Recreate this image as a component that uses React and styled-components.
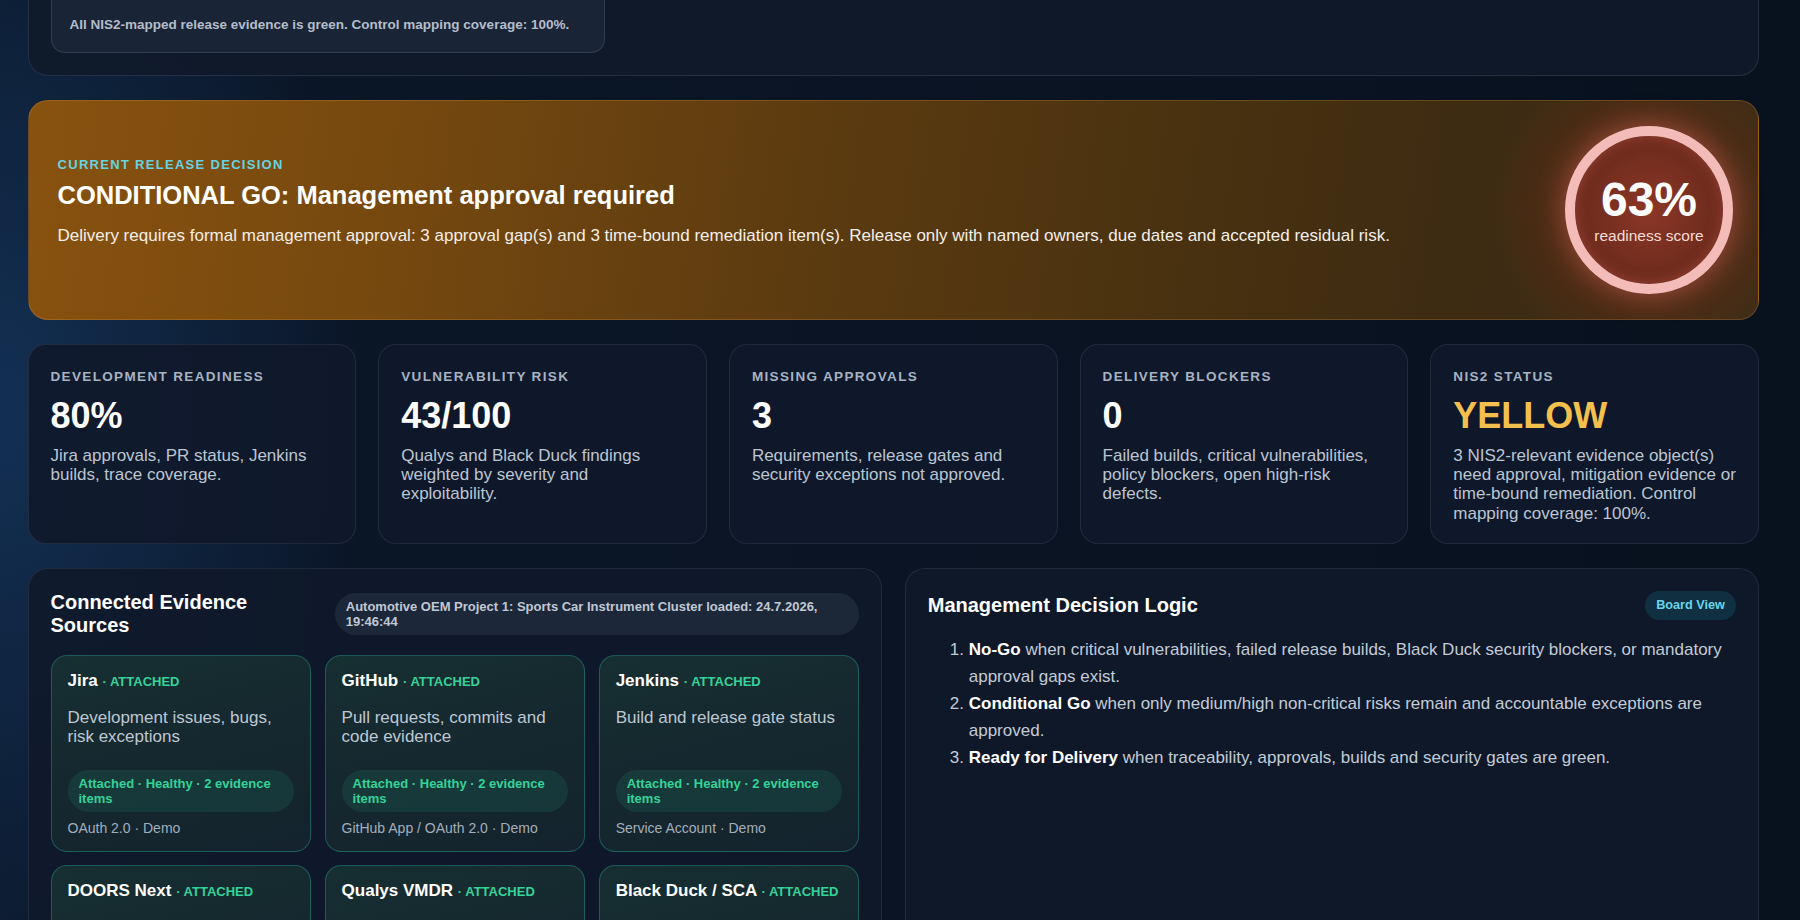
import React from 'react';
import styled, { createGlobalStyle } from 'styled-components';

const GlobalStyle = createGlobalStyle`
  html, body {
    margin: 0;
    height: 100%;
  }
  body {
    overflow: hidden;
    font-family: 'Liberation Sans', Arial, Helvetica, sans-serif;
    color: #e6ebf2;
    background:
      radial-gradient(ellipse 520px 900px at 0% 45%, rgba(28, 78, 135, 0.45), transparent 70%),
      linear-gradient(90deg, #0b1729 0%, #0a1424 45%, #08111e 100%);
  }
`;

const Page = styled.div`
  display: flex;
  flex-direction: column;
  gap: 24px;
  padding: 0 41px 0 27.5px;
`;

/* top nis2 panel, scrolled mostly out of view */
const TopPanel = styled.section`
  margin-top: -111px;
  padding: 22px;
  border-radius: 20px;
  background: rgba(16, 25, 42, 0.9);
  border: 1px solid rgba(148, 163, 184, 0.16);
`;

const EvidenceBox = styled.div`
  width: 554px;
  box-sizing: border-box;
  padding: 20px 18px;
  border-radius: 14px;
  background: #1a2437;
  border: 1px solid rgba(148, 163, 184, 0.2);
`;

const BoxTitle = styled.div`
  font-size: 16px;
  font-weight: 700;
  margin-bottom: 12px;
`;

const BoxValue = styled.div`
  font-size: 30px;
  font-weight: 700;
  color: #34d399;
  margin-bottom: 20px;
`;

const BoxNote = styled.div`
  font-size: 13.5px;
  font-weight: 700;
  color: #b4bdca;
`;

const Hero = styled.section`
  display: flex;
  align-items: center;
  justify-content: space-between;
  padding: 25px 25px 25px 29px;
  border-radius: 20px;
  border: 1px solid rgba(236, 170, 80, 0.22);
  background:
    radial-gradient(circle at 1622px 50%, rgba(150, 55, 35, 0.6) 0, rgba(120, 45, 25, 0.28) 105px, transparent 160px),
    linear-gradient(98deg, #88520f 0%, #75480f 22%, #5c3b10 45%, #4a3210 65%, #3d2b12 82%, #3b2d16 100%);
`;

const HeroText = styled.div`
  padding-bottom: 17px;
`;

const Eyebrow = styled.div`
  font-size: 13px;
  font-weight: 700;
  letter-spacing: 0.1em;
  text-transform: uppercase;
  color: #66d3e3;
`;

const HeroTitle = styled.h1`
  margin: 8px 0 0;
  font-size: 25.5px;
  line-height: 1.2;
  font-weight: 700;
  color: #ffffff;
`;

const HeroDesc = styled.p`
  margin: 16px 0 0;
  font-size: 17px;
  line-height: 20px;
  color: #f4efe8;
`;

const ScoreRing = styled.div`
  flex: 0 0 auto;
  width: 168px;
  height: 168px;
  box-sizing: border-box;
  border-radius: 50%;
  border: 10px solid #f3bcb9;
  background: radial-gradient(circle, #8c3627 0%, #722d1e 55%, #5c2518 100%);
  box-shadow: 0 0 28px rgba(240, 110, 100, 0.5), inset 0 0 14px rgba(240, 110, 100, 0.35);
  display: flex;
  flex-direction: column;
  align-items: center;
  justify-content: center;
`;

const ScoreValue = styled.div`
  font-size: 48px;
  line-height: 1;
  font-weight: 700;
  color: #ffffff;
`;

const ScoreLabel = styled.div`
  margin-top: 3px;
  font-size: 15.5px;
  color: #f6ddd7;
`;

const KpiGrid = styled.div`
  display: grid;
  grid-template-columns: repeat(5, 1fr);
  gap: 22px;
`;

const KpiCard = styled.div`
  padding: 24px 22px 20px;
  border-radius: 18px;
  background: rgba(16, 25, 43, 0.92);
  border: 1px solid rgba(148, 163, 184, 0.13);
`;

const KpiLabel = styled.div`
  font-size: 13.5px;
  line-height: 16px;
  font-weight: 700;
  letter-spacing: 0.1em;
  text-transform: uppercase;
  color: #a7b2c2;
`;

const KpiValue = styled.div`
  margin: 10px 0 10px;
  font-size: 36px;
  line-height: 41px;
  font-weight: 700;
  color: ${(p) => p.$color || '#ffffff'};
`;

const KpiDesc = styled.div`
  font-size: 17px;
  line-height: 19.2px;
  color: #bcc5d1;
`;

const Columns = styled.div`
  display: grid;
  grid-template-columns: 1fr 1fr;
  gap: 23px;
`;

const Panel = styled.section`
  padding: 22px;
  border-radius: 20px;
  background: rgba(15, 25, 42, 0.92);
  border: 1px solid rgba(148, 163, 184, 0.13);
`;

const PanelHead = styled.div`
  display: flex;
  align-items: ${(p) => (p.$top ? 'flex-start' : 'center')};
  justify-content: space-between;
  gap: 16px;
`;

const PanelTitle = styled.h2`
  margin: 0;
  max-width: ${(p) => p.$max || 'none'};
  font-size: 20px;
  font-weight: 700;
  line-height: 23px;
  color: #ffffff;
`;

const LoadPill = styled.div`
  flex: 0 0 524px;
  box-sizing: border-box;
  margin-top: 2px;
  padding: 6px 11px;
  border-radius: 21px;
  background: rgba(148, 163, 184, 0.11);
  font-size: 13px;
  line-height: 15px;
  font-weight: 700;
  color: #c0c8d4;
`;

const Badge = styled.span`
  padding: 7px 11px;
  border-radius: 15px;
  background: rgba(34, 211, 238, 0.12);
  font-size: 12.7px;
  line-height: 15px;
  font-weight: 700;
  color: #67d7ea;
`;

const SourceGrid = styled.div`
  margin-top: 18px;
  display: grid;
  grid-template-columns: repeat(3, 1fr);
  gap: 13px 14px;
`;

const SourceCard = styled.div`
  display: flex;
  flex-direction: column;
  padding: 15px 16px 15px;
  border-radius: 16px;
  border: 1px solid rgba(45, 212, 191, 0.3);
  background: linear-gradient(165deg, #162f31 0%, #15272f 55%, #14232d 100%);
`;

const SourceTitle = styled.div`
  font-size: 17px;
  font-weight: 700;
  color: #ffffff;
  line-height: 20px;
`;

const Attached = styled.span`
  font-size: 13px;
  color: #34d399;
  text-transform: uppercase;
`;

const SourceDesc = styled.div`
  margin-top: 16px;
  min-height: 39px;
  font-size: 17px;
  line-height: 19.5px;
  color: #bfc7d2;
`;

const StatusPill = styled.div`
  margin-top: 23px;
  padding: 6px 11px;
  border-radius: 21px;
  background: rgba(52, 211, 153, 0.1);
  font-size: 13px;
  line-height: 15px;
  font-weight: 700;
  color: #34d399;
`;

const SourceMeta = styled.div`
  margin-top: 8px;
  font-size: 14px;
  line-height: 16px;
  color: #a3aebc;
`;

const Rules = styled.ol`
  margin: 16px 0 0;
  padding-left: 41px;
  font-size: 17px;
  line-height: 27px;
  color: #c3cbd6;
  b {
    color: #ffffff;
  }
`;

const kpis = [
  { label: 'Development Readiness', value: '80%', desc: 'Jira approvals, PR status, Jenkins builds, trace coverage.' },
  { label: 'Vulnerability Risk', value: '43/100', desc: 'Qualys and Black Duck findings weighted by severity and exploitability.' },
  { label: 'Missing Approvals', value: '3', desc: 'Requirements, release gates and security exceptions not approved.' },
  { label: 'Delivery Blockers', value: '0', desc: 'Failed builds, critical vulnerabilities, policy blockers, open high-risk defects.' },
  {
    label: 'NIS2 Status',
    value: 'YELLOW',
    color: '#f3c04d',
    desc: '3 NIS2-relevant evidence object(s) need approval, mitigation evidence or time-bound remediation. Control mapping coverage: 100%.',
  },
];

const sources = [
  { name: 'Jira', desc: 'Development issues, bugs, risk exceptions', auth: 'OAuth 2.0 · Demo' },
  { name: 'GitHub', desc: 'Pull requests, commits and code evidence', auth: 'GitHub App / OAuth 2.0 · Demo' },
  { name: 'Jenkins', desc: 'Build and release gate status', auth: 'Service Account · Demo' },
  { name: 'DOORS Next', desc: 'Requirements, trace and baseline evidence', auth: 'OAuth 2.0 · Demo' },
  { name: 'Qualys VMDR', desc: 'Asset vulnerability and exposure findings', auth: 'API Key · Demo' },
  { name: 'Black Duck / SCA', desc: 'SBOM, OSS and vulnerability policy', auth: 'API Token · Demo' },
];

export default function App() {
  return (
    <>
      <GlobalStyle />
      <Page>
        <TopPanel>
          <EvidenceBox>
            <BoxTitle>NIS2 Release Evidence</BoxTitle>
            <BoxValue>GREEN</BoxValue>
            <BoxNote>All NIS2-mapped release evidence is green. Control mapping coverage: 100%.</BoxNote>
          </EvidenceBox>
        </TopPanel>

        <Hero>
          <HeroText>
            <Eyebrow>Current Release Decision</Eyebrow>
            <HeroTitle>CONDITIONAL GO: Management approval required</HeroTitle>
            <HeroDesc>
              Delivery requires formal management approval: 3 approval gap(s) and 3 time-bound remediation item(s).
              Release only with named owners, due dates and accepted residual risk.
            </HeroDesc>
          </HeroText>
          <ScoreRing>
            <ScoreValue>63%</ScoreValue>
            <ScoreLabel>readiness score</ScoreLabel>
          </ScoreRing>
        </Hero>

        <KpiGrid>
          {kpis.map((k) => (
            <KpiCard key={k.label}>
              <KpiLabel>{k.label}</KpiLabel>
              <KpiValue $color={k.color}>{k.value}</KpiValue>
              <KpiDesc>{k.desc}</KpiDesc>
            </KpiCard>
          ))}
        </KpiGrid>

        <Columns>
          <Panel>
            <PanelHead $top>
              <PanelTitle $max="270px">Connected Evidence Sources</PanelTitle>
              <LoadPill>Automotive OEM Project 1: Sports Car Instrument Cluster loaded: 24.7.2026, 19:46:44</LoadPill>
            </PanelHead>
            <SourceGrid>
              {sources.map((s) => (
                <SourceCard key={s.name}>
                  <SourceTitle>
                    {s.name} <Attached>· Attached</Attached>
                  </SourceTitle>
                  <SourceDesc>{s.desc}</SourceDesc>
                  <StatusPill>Attached · Healthy · 2 evidence items</StatusPill>
                  <SourceMeta>{s.auth}</SourceMeta>
                </SourceCard>
              ))}
            </SourceGrid>
          </Panel>

          <Panel>
            <PanelHead>
              <PanelTitle>Management Decision Logic</PanelTitle>
              <Badge>Board View</Badge>
            </PanelHead>
            <Rules>
              <li>
                <b>No-Go</b> when critical vulnerabilities, failed release builds, Black Duck security blockers, or
                mandatory approval gaps exist.
              </li>
              <li>
                <b>Conditional Go</b> when only medium/high non-critical risks remain and accountable exceptions are
                approved.
              </li>
              <li>
                <b>Ready for Delivery</b> when traceability, approvals, builds and security gates are green.
              </li>
            </Rules>
          </Panel>
        </Columns>
      </Page>
    </>
  );
}
